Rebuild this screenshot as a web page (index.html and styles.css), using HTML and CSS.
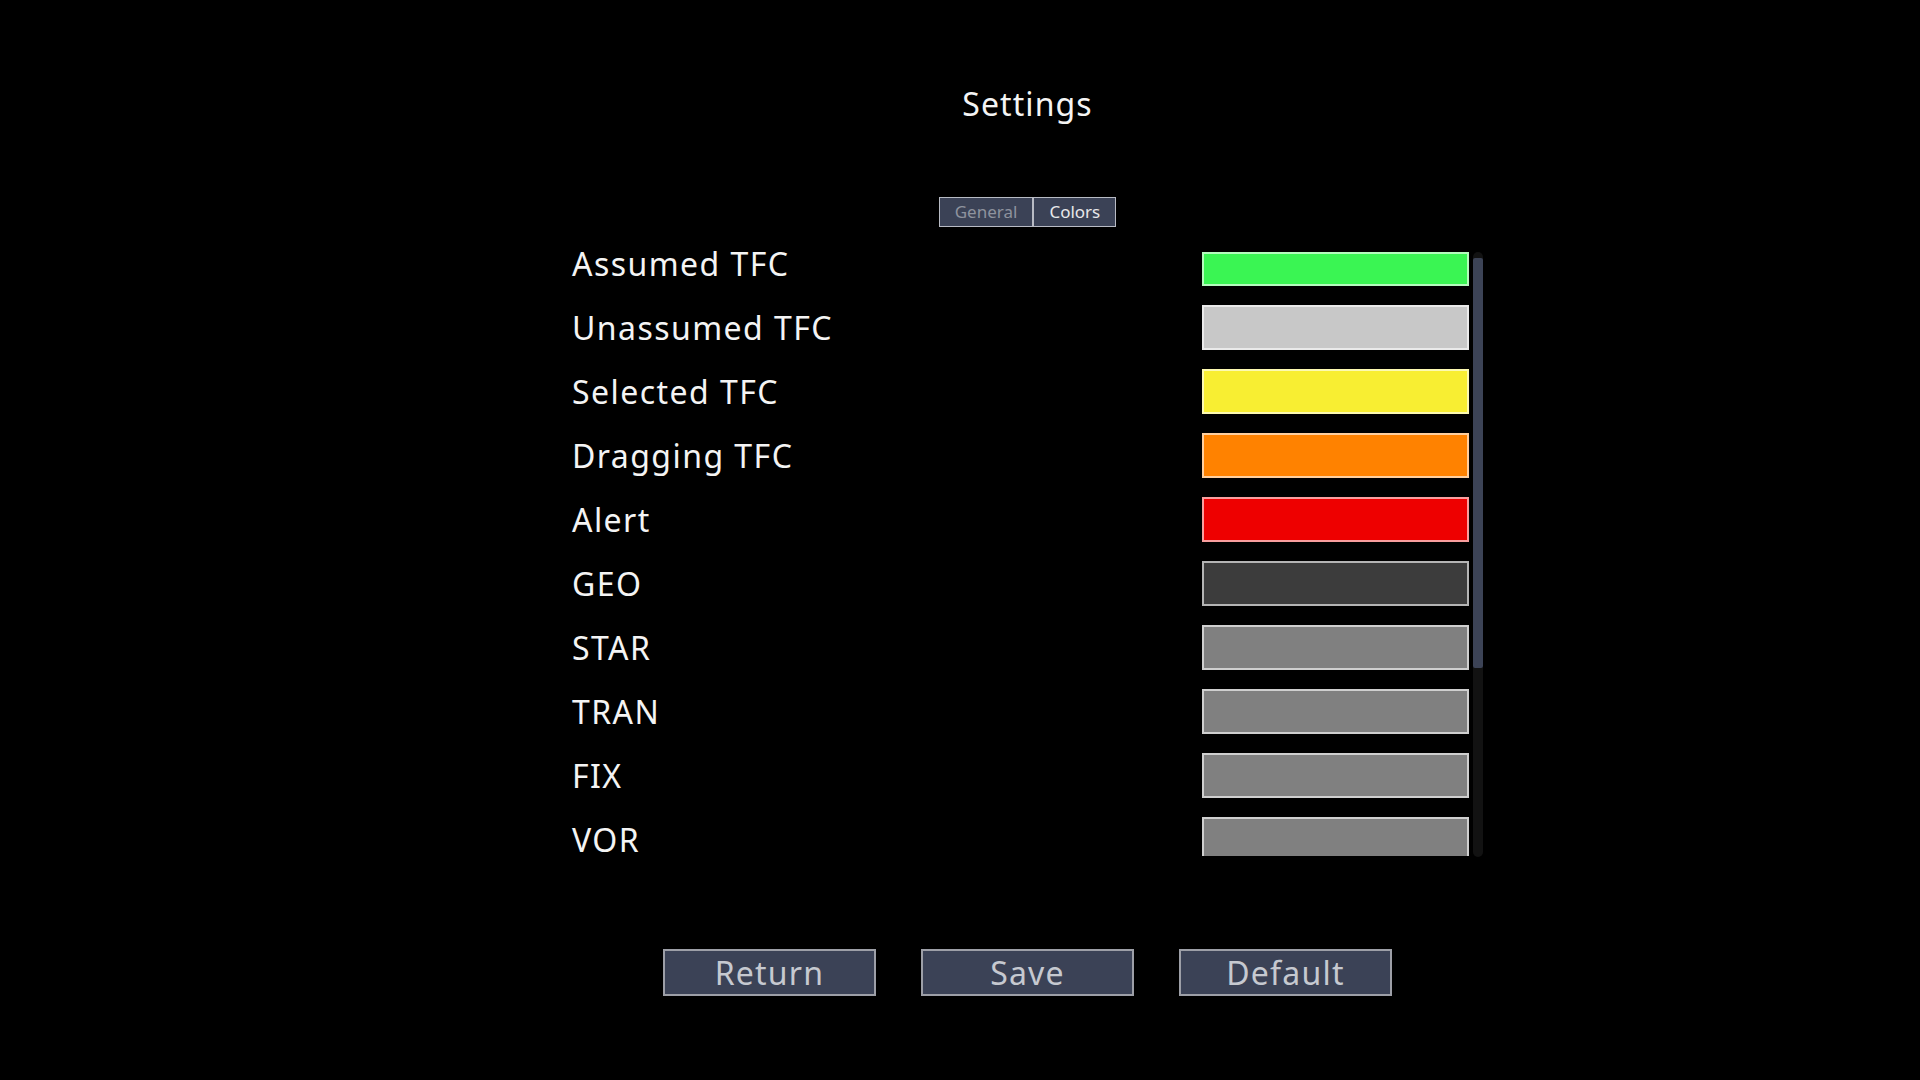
FILE: index.html
```html
<!DOCTYPE html>
<html lang="en">
<head>
  <meta charset="UTF-8" />
  <title>Settings</title>
  <link rel="stylesheet" href="styles.css">
</head>
<body>

  <div class="settings">
    <h1 class="title">Settings</h1>

    <!-- Tabs -->
    <div class="tabs">
      <button class="tab">General</button>
      <button class="tab active">Colors</button>
    </div>

    <!-- Color list (scrolled a little, first and last swatch cut by the view) -->
    <div class="color-panel">
      <div class="color-rows">
        <div class="color-row"><span class="color-name">Assumed TFC</span><span class="swatch cut-top" style="background-color: #3af553;"></span></div>
        <div class="color-row"><span class="color-name">Unassumed TFC</span><span class="swatch" style="background-color: #c8c8c8;"></span></div>
        <div class="color-row"><span class="color-name">Selected TFC</span><span class="swatch" style="background-color: #f8ee32;"></span></div>
        <div class="color-row"><span class="color-name">Dragging TFC</span><span class="swatch" style="background-color: #ff8200;"></span></div>
        <div class="color-row"><span class="color-name">Alert</span><span class="swatch" style="background-color: #ee0000;"></span></div>
        <div class="color-row"><span class="color-name">GEO</span><span class="swatch" style="background-color: #3c3c3c;"></span></div>
        <div class="color-row"><span class="color-name">STAR</span><span class="swatch" style="background-color: #808080;"></span></div>
        <div class="color-row"><span class="color-name">TRAN</span><span class="swatch" style="background-color: #808080;"></span></div>
        <div class="color-row"><span class="color-name">FIX</span><span class="swatch" style="background-color: #808080;"></span></div>
        <div class="color-row"><span class="color-name">VOR</span><span class="swatch cut-bottom" style="background-color: #808080;"></span></div>
      </div>
      <div class="scrollbar"><div class="grabber"></div></div>
    </div>

    <!-- Buttons -->
    <div class="actions">
      <button class="action-btn">Return</button>
      <button class="action-btn">Save</button>
      <button class="action-btn">Default</button>
    </div>
  </div>

</body>
</html>
```

FILE: styles.css
```css
* {
  margin: 0;
  padding: 0;
  box-sizing: border-box;
  font-family: 'Noto Sans', 'Open Sans', sans-serif;
}

body {
  background-color: #000;
  color: #f2f2f2;
}

.settings {
  width: 911px;
  margin-left: 572px;
  padding-top: 82px;
}

.title {
  font-size: 32px;
  font-weight: normal;
  line-height: 44px;
  letter-spacing: 1.1px;
  text-align: center;
  color: #f4f4f4;
}

.tabs {
  display: flex;
  justify-content: center;
  margin-top: 71px;
}

.tab {
  height: 30px;
  padding: 0 15px;
  background-color: #3b4256;
  border: 1px solid #b8bbc4;
  color: #8e939e;
  font-size: 17px;
  line-height: 26px;
}

.tab.active {
  color: #e8e8ea;
}

.color-panel {
  display: flex;
  align-items: flex-start;
  gap: 4px;
  margin-top: 14px;
}

.color-rows {
  flex: 1;
  display: flex;
  flex-direction: column;
  gap: 19px;
}

.color-row {
  display: flex;
  justify-content: space-between;
  align-items: center;
  height: 45px;
}

.color-name {
  font-size: 32px;
  line-height: 45px;
  letter-spacing: 1.45px;
  color: #f4f4f4;
}

.swatch {
  width: 267px;
  height: 45px;
  border: 2px solid rgba(255, 255, 255, 0.62);
}

.swatch.cut-top {
  align-self: flex-end;
  height: 34px;
}

.swatch.cut-bottom {
  align-self: flex-start;
  height: 39px;
  border-bottom: none;
}

.scrollbar {
  width: 10px;
  height: 605px;
  margin-top: 11px;
  background-color: #121212;
  border-radius: 5px;
}

.grabber {
  height: 410px;
  margin-top: 6px;
  background-color: #3c4356;
  border-radius: 2px;
}

.actions {
  display: flex;
  justify-content: center;
  gap: 45px;
  margin-top: 87px;
}

.action-btn {
  width: 213px;
  height: 47px;
  background-color: #3b4256;
  border: 2px solid #9d9fa7;
  color: #c6c9d0;
  font-size: 32px;
  line-height: 41px;
  letter-spacing: 1.2px;
}
```
